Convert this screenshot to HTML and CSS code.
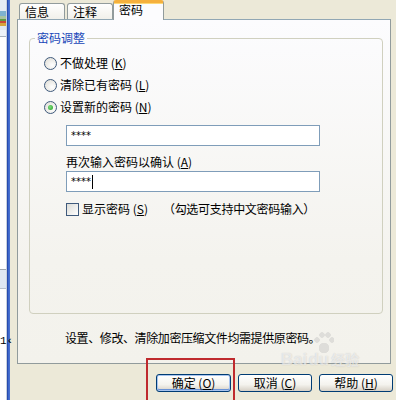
FILE: index.html
```html
<!DOCTYPE html>
<html lang="zh-CN">
<head>
<meta charset="utf-8">
<title>密码</title>
<link rel="stylesheet" href="styles.css">
</head>
<body>
<div class="screen">
  <div class="behind">
    <div class="b-top"></div>
    <div class="b-icons"></div>
    <div class="b-bar"></div>
    <div class="b-white"></div>
    <div class="b-row"></div>
    <div class="b-rest"><span class="b-char">1‹</span></div>
  </div>
  <div class="edge"></div>
  <div class="dialog">
    <div class="tabs">
      <div class="tab">信息</div>
      <div class="tab">注释</div>
      <div class="tab tab-active">密码</div>
    </div>
    <div class="panel">
      <fieldset class="group">
        <legend class="legend">密码调整</legend>
        <div class="opt"><span class="radio"></span><span>不做处理 (<u>K</u>)</span></div>
        <div class="opt"><span class="radio"></span><span>清除已有密码 (<u>L</u>)</span></div>
        <div class="opt"><span class="radio radio-on"></span><span>设置新的密码 (<u>N</u>)</span></div>
        <div class="field">****</div>
        <div class="label">再次输入密码以确认 (<u>A</u>)</div>
        <div class="field field-2">****<span class="caret"></span></div>
        <div class="check-row"><span class="check"></span><span>显示密码 (<u>S</u>)</span><span class="hint">（勾选可支持中文密码输入）</span></div>
      </fieldset>
      <p class="note">设置、修改、清除加密压缩文件均需提供原密码。</p>
    </div>
    <div class="buttons">
      <div class="btn btn-default">确定 (<u>O</u>)</div>
      <div class="btn">取消 (<u>C</u>)</div>
      <div class="btn">帮助 (<u>H</u>)</div>
    </div>
  </div>
  <div class="highlight"></div>
  <div class="paw"></div>
  <div class="watermark"><span>Bai</span><span class="wm-du">du</span><span class="wm-cn">经验</span></div>
</div>
</body>
</html>
```
FILE: styles.css
```css
html, body {
  margin: 0;
  padding: 0;
}
body {
  font-family: "Noto Sans CJK SC", "Liberation Sans", sans-serif;
  font-size: 12px;
  color: #000;
  background: #ece9d8;
}
.screen {
  position: relative;
  width: 396px;
  height: 400px;
  overflow: hidden;
  display: flex;
  background: #ece9d8;
}

/* window behind */
.behind {
  width: 7px;
  display: flex;
  flex-direction: column;
  background: #fff;
  border-right: 1px solid #c8d0dc;
  box-sizing: border-box;
}
.b-top { height: 11px; background: #e4ebf4; }
.b-icons {
  height: 19px;
  background: linear-gradient(#7fb2cf 0 5px, #a9c3a0 5px 8px, #5f9a46 8px 10px, #c9483a 10px 12px, #d6a43a 12px 15px, #dfe7ef 15px);
}
.b-bar { height: 6px; background: #eef3f9; border-bottom: 1px solid #a9b3be; }
.b-white { height: 232px; background: #fff; border-bottom: 1px solid #a0a8b0; }
.b-row { height: 18px; background: #dfe7f3; border-bottom: 1px solid #b7c0cc; }
.b-rest { flex: 1; background: #fff; position: relative; }
.b-char {
  display: block;
  margin-top: 46px;
  font-family: "Liberation Mono", monospace;
  font-size: 11px;
  line-height: 12px;
  white-space: nowrap;
}
.edge {
  width: 3px;
  background: linear-gradient(to right, #1d3f9e, #3c66cb, #4d75cf);
}

/* dialog */
.dialog {
  flex: 1;
  display: flex;
  flex-direction: column;
  padding-left: 7px;
}
.tabs {
  height: 19px;
  display: flex;
  align-items: flex-end;
  padding-left: 2px;
}
.tab {
  box-sizing: border-box;
  width: 46px;
  height: 16px;
  margin-right: 2px;
  padding-left: 5px;
  border: 1px solid #919b9c;
  border-bottom: none;
  border-radius: 3px 3px 0 0;
  background: linear-gradient(#fefefe, #f1f0ea);
  line-height: 15px;
}
.tab:nth-child(2) { margin-right: 0; }
.tab-active {
  position: relative;
  z-index: 1;
  width: 51px;
  height: 20px;
  margin-bottom: -1px;
  border-top: 3px solid #f5b03d;
  box-shadow: inset 0 1px 0 #fdd878;
  background: #fcfcfe;
  line-height: 14px;
  padding-bottom: 3px;
}
.panel {
  box-sizing: border-box;
  width: 374px;
  height: 345px;
  border: 1px solid #919b9c;
  border-top-color: #91a7b4;
  background: linear-gradient(#fcfcfe, #f4f3ee 70%, #f3f2ec);
  display: flex;
  flex-direction: column;
}
.group {
  box-sizing: border-box;
  width: 354px;
  height: 283px;
  margin: 11px 0 0 11px;
  padding: 0 0 0 5px;
  border: 1px solid #d0d0bf;
  border-radius: 4px;
  min-width: 0;
}
.legend {
  padding: 0 2px;
  line-height: 14px;
  color: #1846b8;
}
.opt {
  display: flex;
  align-items: center;
  height: 22px;
  padding-left: 9px;
  line-height: 14px;
}
.opt:first-of-type { margin-top: 7px; }
.radio {
  box-sizing: border-box;
  width: 13px;
  height: 13px;
  border: 1px solid #3f5a7c;
  border-radius: 50%;
  background: radial-gradient(circle at 65% 65%, #fff, #dcdad2);
  margin-right: 3px;
  display: flex;
  align-items: center;
  justify-content: center;
}
.radio-on::after {
  content: "";
  width: 5px;
  height: 5px;
  border-radius: 50%;
  background: radial-gradient(circle at 40% 40%, #7fdc7f, #21a121);
}
.field {
  box-sizing: border-box;
  width: 254px;
  height: 21px;
  margin: 7px 0 0 31px;
  padding-left: 4px;
  border: 1px solid #7f9db9;
  background: #fff;
  font-family: "DejaVu Sans", sans-serif;
  font-size: 10px;
  line-height: 19px;
  display: flex;
  align-items: center;
}
.field-2 { margin-top: 2px; }
.caret {
  display: inline-block;
  width: 1px;
  height: 14px;
  background: #000;
  margin-left: 1px;
}
.label {
  margin: 9px 0 0 31px;
  line-height: 14px;
}
.check-row {
  display: flex;
  align-items: center;
  margin: 10px 0 0 31px;
  height: 14px;
  line-height: 14px;
}
.check {
  box-sizing: border-box;
  width: 13px;
  height: 13px;
  border: 1px solid #3f5a7c;
  background: linear-gradient(135deg, #dcdcd7, #fff);
  margin-right: 3px;
}
.hint { margin-left: 15px; letter-spacing: -0.3px; }
.note {
  margin: 17px 0 0 47px;
  line-height: 14px;
  letter-spacing: -0.4px;
}
.buttons {
  display: flex;
  justify-content: flex-end;
  gap: 7px;
  margin-top: 10px;
  padding-right: 3px;
}
.btn {
  box-sizing: border-box;
  width: 74px;
  height: 18px;
  border: 1px solid #003c74;
  border-radius: 3px;
  background: linear-gradient(#fff, #f4f3ee 60%, #d6d0c5);
  text-align: center;
  line-height: 16px;
}
.btn-default {
  width: 75px;
  box-shadow: inset 0 0 0 1px #a8c4ee, inset 0 -1px 0 1px #6b93d6;
}

/* overlays */
.highlight {
  position: absolute;
  left: 146px;
  top: 358px;
  width: 89px;
  height: 50px;
  box-sizing: border-box;
  border: 2px solid #bf2a2d;
}
.paw {
  position: absolute;
  left: 314px;
  top: 331px;
  width: 20px;
  height: 24px;
  opacity: 0.35;
  background:
    radial-gradient(circle at 10px 17px, #b8b8b8 0 5px, transparent 5.5px),
    radial-gradient(circle at 3px 9px, #b8b8b8 0 2.5px, transparent 3px),
    radial-gradient(circle at 8px 4px, #b8b8b8 0 2.5px, transparent 3px),
    radial-gradient(circle at 14px 4px, #b8b8b8 0 2.5px, transparent 3px),
    radial-gradient(circle at 18px 9px, #b8b8b8 0 2.5px, transparent 3px);
}
.watermark {
  position: absolute;
  left: 281px;
  top: 349px;
  display: flex;
  align-items: baseline;
  font-family: "Liberation Sans", sans-serif;
  font-weight: bold;
  font-size: 17px;
  line-height: 20px;
  color: rgba(255, 255, 255, 0.6);
  text-shadow: 0 0 1px rgba(140, 140, 140, 0.45);
  white-space: nowrap;
}
.wm-du { margin-left: 1px; }
.wm-cn { font-family: "Noto Sans CJK SC", sans-serif; font-size: 14px; margin-left: 2px; }
```
